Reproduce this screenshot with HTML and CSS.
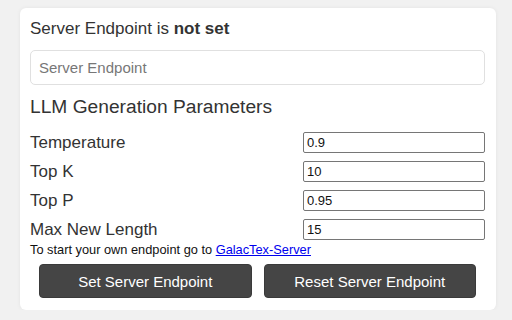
FILE: index.html
```html
<!DOCTYPE html>
<html>
<head>
<meta charset="utf-8">
<link rel="stylesheet" href="styles.css">
</head>
<body>
<div class="card">
  <div class="status">Server Endpoint is <b>not set</b></div>
  <input class="endpoint" type="text" placeholder="Server Endpoint">
  <div class="heading">LLM Generation Parameters</div>
  <div class="params">
    <label class="label">Temperature</label><input class="field" type="text" value="0.9">
    <label class="label">Top K</label><input class="field" type="text" value="10">
    <label class="label">Top P</label><input class="field" type="text" value="0.95">
    <label class="label">Max New Length</label><input class="field" type="text" value="15">
  </div>
  <div class="note">To start your own endpoint go to <a href="#">GalacTex-Server</a></div>
  <div class="buttons">
    <button class="btn">Set Server Endpoint</button>
    <button class="btn">Reset Server Endpoint</button>
  </div>
</div>
</body>
</html>
```
FILE: styles.css
```css
html, body {
  margin: 0;
  padding: 0;
  background: #f1f1f1;
  font-family: "Liberation Sans", Arial, sans-serif;
  color: #333;
}
.card {
  margin: 8px 16px 0 20px;
  width: 476px;
  height: 302px;
  box-sizing: border-box;
  background: #fff;
  border-radius: 6px;
  box-shadow: 0 0 4px rgba(0,0,0,0.06);
  padding: 11px 11px 12px 10px;
  display: flex;
  flex-direction: column;
}
.status {
  font-size: 17px;
  line-height: 20px;
}
.status b {
  font-weight: bold;
}
.endpoint {
  margin-top: 11px;
  height: 36px;
  width: 455px;
  box-sizing: border-box;
  border: 1px solid #e0e0e0;
  border-radius: 5px;
  padding: 0 8px;
  font-family: "Liberation Sans", Arial, sans-serif;
  font-size: 15px;
  color: #333;
  outline: none;
}
.endpoint::placeholder {
  color: #777;
}
.heading {
  margin-top: 10px;
  font-size: 19.2px;
  line-height: 24px;
}
.params {
  margin-top: 13px;
  display: grid;
  grid-template-columns: 273px 182px;
  row-gap: 7.8px;
  align-items: center;
}
.label {
  font-size: 17px;
  line-height: 21px;
}
.field {
  height: 21px;
  width: 182px;
  box-sizing: border-box;
  border: 1px solid #767676;
  border-radius: 2px;
  padding: 0 3px;
  font-family: "Liberation Sans", Arial, sans-serif;
  font-size: 13px;
  color: #111;
  margin: 0;
}
.note {
  margin-top: 2.5px;
  font-size: 12.8px;
  line-height: 16px;
  color: #111;
}
.note a {
  color: #0000ee;
  text-decoration: underline;
}
.buttons {
  margin-top: 6px;
  display: flex;
  gap: 12px;
  padding: 0 9px;
}
.btn {
  flex: 1;
  height: 34px;
  background: #454545;
  color: #fff;
  border: 1px solid #3a3a3a;
  border-radius: 4px;
  font-family: "Liberation Sans", Arial, sans-serif;
  font-size: 15px;
  padding: 0;
}
```
